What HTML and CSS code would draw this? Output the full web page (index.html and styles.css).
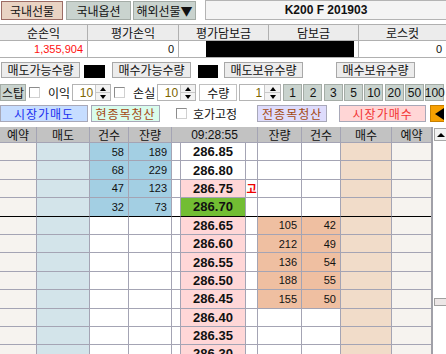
FILE: index.html
```html
<!DOCTYPE html>
<html lang="ko">
<head>
    <meta charset="UTF-8">
    <title>K200 선물 주문</title>
    <link rel="stylesheet" href="styles.css">
</head>
<body>
    <div class="screen">
        <div class="tabs">
            <div class="tab on">국내선물</div>
            <div class="tab t2">국내옵션</div>
            <div class="tab t3">해외선물▼</div>
            <div class="code">K200 F 201903</div>
        </div>

        <div class="summary">
            <div class="h">순손익</div>
            <div class="h">평가손익</div>
            <div class="h">평가담보금</div>
            <div class="h">담보금</div>
            <div class="h last">로스컷</div>
            <div class="v red">1,355,904</div>
            <div class="v">0</div>
            <div class="v masked left"><span class="mask"></span></div>
            <div class="v masked right"><span class="mask"></span></div>
            <div class="v last">0</div>
        </div>

        <div class="qty-row">
            <div class="lbl">매도가능수량</div>
            <div class="blk"></div>
            <div class="lbl l2">매수가능수량</div>
            <div class="blk b2"></div>
            <div class="lbl l3">매도보유수량</div>
            <div class="lbl l4">매수보유수량</div>
        </div>

        <div class="ctrl-row">
            <div class="stop">스탑</div>
            <span class="chk"></span>
            <span class="txt">이익</span>
            <div class="spin">
                <span class="val">10</span>
                <span class="arrows"><i class="up"></i><i class="down"></i></span>
            </div>
            <span class="chk"></span>
            <span class="txt">손실</span>
            <div class="spin">
                <span class="val">10</span>
                <span class="arrows"><i class="up"></i><i class="down"></i></span>
            </div>
            <div class="qty-lbl">수량</div>
            <div class="spin wide">
                <span class="val">1</span>
                <span class="arrows"><i class="up"></i><i class="down"></i></span>
            </div>
            <div class="nums">
                <div class="num">1</div>
                <div class="num">2</div>
                <div class="num">3</div>
                <div class="num">5</div>
                <div class="num">10</div>
                <div class="num">20</div>
                <div class="num">50</div>
                <div class="num">100</div>
            </div>
        </div>

        <div class="order-row">
            <div class="obtn sell">시장가매도</div>
            <div class="obtn clear-one">현종목청산</div>
            <span class="chk fix"></span>
            <span class="txt fix-txt">호가고정</span>
            <div class="obtn clear-all">전종목청산</div>
            <div class="obtn buy">시장가매수</div>
            <div class="collapse"><i></i></div>
        </div>

        <div class="book">
            <div class="grid" id="grid">
                <div class="hd">예약</div>
                <div class="hd">매도</div>
                <div class="hd">건수</div>
                <div class="hd">잔량</div>
                <div class="hd time">09:28:55</div>
                <div class="hd">잔량</div>
                <div class="hd">건수</div>
                <div class="hd">매수</div>
                <div class="hd end">예약</div>
            </div>
            <div class="scroll">
                <div class="sc-up"><i></i></div>
                <div class="sc-thumb"></div>
            </div>
        </div>
    </div>
    <script>
        const asks = [
            { price: '286.85', cnt: 58, qty: 189 },
            { price: '286.80', cnt: 68, qty: 229 },
            { price: '286.75', cnt: 47, qty: 123, tone: 'pink', mark: '고' },
            { price: '286.70', cnt: 32, qty: 73, tone: 'now' }
        ];
        const bids = [
            { price: '286.65', qty: 105, cnt: 42 },
            { price: '286.60', qty: 212, cnt: 49 },
            { price: '286.55', qty: 136, cnt: 54 },
            { price: '286.50', qty: 188, cnt: 55 },
            { price: '286.45', qty: 155, cnt: 50 },
            { price: '286.40' },
            { price: '286.35' },
            { price: '286.30' },
            { price: '286.25' }
        ];

        const grid = document.getElementById('grid');
        let html = '';

        asks.forEach((r, i) => {
            const line = i === asks.length - 1 ? ' split' : '';
            html += `<div class="c rsv${line}"></div>
                     <div class="c ask${line}"></div>
                     <div class="c n askd${line}">${r.cnt}</div>
                     <div class="c n askd${line}">${r.qty}</div>
                     <div class="c${line}"></div>
                     <div class="c price ${r.tone || ''}${line}">${r.price}</div>
                     <div class="c mark${line}">${r.mark || ''}</div>
                     <div class="c${line}"></div>
                     <div class="c${line}"></div>
                     <div class="c bid${line}"></div>
                     <div class="c rsv end${line}"></div>`;
        });

        bids.forEach(r => {
            const d = r.qty ? ' bidd' : '';
            html += `<div class="c rsv"></div>
                     <div class="c ask"></div>
                     <div class="c"></div>
                     <div class="c"></div>
                     <div class="c"></div>
                     <div class="c price pink">${r.price}</div>
                     <div class="c mark"></div>
                     <div class="c n${d}">${r.qty || ''}</div>
                     <div class="c n${d}">${r.cnt || ''}</div>
                     <div class="c bid"></div>
                     <div class="c rsv end"></div>`;
        });

        grid.insertAdjacentHTML('beforeend', html);
    </script>
</body>
</html>
```

FILE: styles.css
```css
body {
    margin: 0;
    background-color: #fff;
    font-family: "Liberation Sans", "Noto Sans CJK KR", sans-serif;
    font-size: 12px;
    color: #111;
    overflow: hidden;
}
.screen {
    width: 446px;
    height: 354px;
    overflow: hidden;
}
.kr,
.tab, .h, .lbl, .stop, .txt, .qty-lbl, .obtn, .hd {
    font-family: "Noto Sans CJK KR", sans-serif;
    line-height: 1;
}

/* top tabs */
.tabs {
    display: flex;
    height: 20px;
}
.tab {
    box-sizing: border-box;
    height: 19px;
    margin-top: 1px;
    display: flex;
    align-items: center;
    justify-content: center;
    border: 1px solid #a4aca6;
    background-color: #c9d3ce;
    font-size: 12px;
}
.tab.on {
    width: 62px;
    margin-left: 1px;
    background-color: #e9d3c3;
    border-color: #9c6c64;
}
.tab.t2 {
    width: 65px;
    margin-left: 3px;
}
.tab.t3 {
    width: 63px;
    margin-left: 2px;
}
.code {
    flex: 1;
    box-sizing: border-box;
    height: 20px;
    margin-left: 9px;
    border: 1px solid #b4b4b4;
    border-right: none;
    background-color: #f4f4f4;
    display: flex;
    align-items: center;
    justify-content: center;
    font-weight: bold;
    font-size: 12px;
}

/* summary */
.summary {
    display: grid;
    grid-template-columns: 88px 91px 90px 90px 87px;
    margin-top: 4px;
    border-top: 1px solid #b0b0b0;
}
.summary .h {
    height: 15px;
    display: flex;
    align-items: center;
    justify-content: center;
    background-color: #ececec;
    border-right: 1px solid #b0b0b0;
    border-bottom: 1px solid #b0b0b0;
    font-size: 12px;
}
.summary .v {
    height: 16px;
    display: flex;
    align-items: center;
    justify-content: flex-end;
    padding-right: 4px;
    border-right: 1px solid #b0b0b0;
    border-bottom: 1px solid #b0b0b0;
    font-size: 11px;
}
.summary .last {
    border-right: none;
}
.summary .red {
    color: #ff1010;
}
.summary .masked {
    padding: 0;
    align-items: stretch;
}
.summary .masked.left {
    padding-left: 27px;
    border-right: none;
}
.summary .masked.right {
    padding-right: 4px;
}
.mask {
    flex: 1;
    background-color: #000;
}

/* possible / holding quantity row */
.qty-row {
    display: flex;
    align-items: center;
    height: 16px;
    margin-top: 4px;
}
.lbl {
    box-sizing: border-box;
    width: 79px;
    height: 16px;
    margin-left: 1px;
    display: flex;
    align-items: center;
    justify-content: center;
    background-color: #ececec;
    border: 1px solid #a8a8a8;
    font-size: 12px;
}
.lbl.l2 {
    margin-left: 7px;
}
.lbl.l3 {
    margin-left: 6px;
}
.lbl.l4 {
    margin-left: 33px;
}
.blk {
    width: 21px;
    height: 13px;
    margin-left: 4px;
    margin-top: 2px;
    background-color: #000;
}
.blk.b2 {
    width: 20px;
    margin-left: 7px;
}

/* stop / quantity row */
.ctrl-row {
    display: flex;
    align-items: center;
    height: 17px;
    margin-top: 6px;
}
.stop {
    box-sizing: border-box;
    width: 26px;
    height: 17px;
    display: flex;
    align-items: center;
    justify-content: center;
    background-color: #c9d3ce;
    border: 1px solid #a4aca6;
    font-size: 12px;
}
.chk {
    box-sizing: border-box;
    width: 11px;
    height: 11px;
    margin-left: 3px;
    background-color: #fff;
    border: 1px solid #8c8c8c;
    border-right-color: #d0d0d0;
    border-bottom-color: #d0d0d0;
}
.txt {
    margin-left: 8px;
    font-size: 12px;
}
.spin {
    box-sizing: border-box;
    width: 39px;
    height: 17px;
    margin-left: 2px;
    display: flex;
    border: 1px solid #b4b4b4;
    background-color: #fff;
}
.spin .val {
    flex: 1;
    display: flex;
    align-items: center;
    justify-content: flex-end;
    padding-right: 2px;
    color: #7c6400;
    font-size: 12px;
}
.arrows {
    width: 14px;
    display: flex;
    flex-direction: column;
    border-left: 1px solid #c8c8c8;
    background-color: #f2f2f2;
}
.arrows i {
    flex: 1;
    display: flex;
    align-items: center;
    justify-content: center;
}
.arrows i::after {
    content: "";
    border-left: 3px solid transparent;
    border-right: 3px solid transparent;
}
.arrows .up {
    border-bottom: 1px solid #c8c8c8;
}
.arrows .up::after {
    border-bottom: 4px solid #000;
}
.arrows .down::after {
    border-top: 4px solid #000;
}
.qty-lbl {
    box-sizing: border-box;
    width: 38px;
    height: 17px;
    margin-left: 3px;
    padding-left: 7px;
    display: flex;
    align-items: center;
    border: 1px solid #c0c0c0;
    font-size: 12px;
}
.spin.wide {
    width: 42px;
}
.spin.wide .arrows {
    width: 15px;
}
.nums {
    display: flex;
    gap: 1.3px;
    margin-left: 2px;
}
.num {
    box-sizing: border-box;
    width: 19px;
    height: 17px;
    display: flex;
    align-items: center;
    justify-content: center;
    background-color: #c9d3ce;
    border: 1px solid #a4aca6;
    font-size: 12px;
    flex-shrink: 0;
}

/* market order buttons */
.order-row {
    display: flex;
    align-items: center;
    height: 17px;
    margin-top: 4px;
}
.obtn {
    box-sizing: border-box;
    height: 17px;
    display: flex;
    align-items: center;
    justify-content: center;
    font-size: 12px;
    letter-spacing: 1px;
    border: 1px solid #a8a8b8;
}
.obtn.sell {
    width: 88px;
    background-color: #c6ddff;
    color: #1a2ef0;
}
.obtn.clear-one {
    width: 69px;
    margin-left: 3px;
    background-color: #d9fcec;
    color: #a44a14;
}
.chk.fix {
    margin-left: 16px;
}
.fix-txt {
    margin-left: 6px;
}
.obtn.clear-all {
    width: 70px;
    margin-left: 20px;
    background-color: #dedcfc;
    color: #a44a14;
}
.obtn.buy {
    width: 87px;
    margin-left: 12px;
    background-color: #ffd6d6;
    color: #f23232;
}
.collapse {
    box-sizing: border-box;
    width: 14px;
    height: 17px;
    margin-left: 4px;
    flex-shrink: 0;
    display: flex;
    align-items: center;
    justify-content: flex-end;
    background-color: #f7a000;
    border: 1px solid #c88000;
    border-right: none;
}
.collapse i {
    border-top: 6px solid transparent;
    border-bottom: 6px solid transparent;
    border-right: 9px solid #000;
}

/* order book */
.book {
    display: flex;
    margin-top: 5px;
}
.grid {
    width: 433px;
    box-sizing: border-box;
    border-right: 2px solid #a0a0a8;
    display: grid;
    grid-template-columns: 37px 53px 39px 43px 9px 65px 12px 44px 39px 51px 39px;
    grid-template-rows: 16px;
    grid-auto-rows: 18.4px;
}
.hd {
    display: flex;
    align-items: center;
    justify-content: center;
    background-color: #c2c2c2;
    border-right: 1px solid #a4a4b4;
    border-bottom: 1px solid #a4a4b4;
    font-size: 12px;
}
.hd.time {
    grid-column: span 3;
    font-family: "Liberation Sans", sans-serif;
    font-size: 12px;
}
.hd.end,
.c.end {
    border-right: none;
}
.c {
    box-sizing: border-box;
    display: flex;
    align-items: center;
    justify-content: flex-end;
    padding-right: 4px;
    border-right: 1px solid #a4a4b4;
    border-bottom: 1px solid #a4a4b4;
    font-size: 11px;
    background-color: #fff;
}
.c.split {
    border-bottom-color: #000;
}
.c.rsv {
    background-color: #f6f3ef;
}
.c.ask {
    background-color: #d3e4ea;
}
.c.bid {
    background-color: #f1dcc9;
}
.c.askd {
    background-color: #a3cfe3;
}
.c.bidd {
    background-color: #efbfa1;
}
.c.price {
    justify-content: center;
    padding-right: 0;
    font-size: 13px;
    font-weight: bold;
}
.c.price.pink {
    background-color: #ffd7d7;
}
.c.price.now {
    background-color: #72bd33;
}
.c.mark {
    padding-right: 0;
    justify-content: center;
    color: #ee0000;
    font-family: "Noto Sans CJK KR", sans-serif;
    font-weight: bold;
    font-size: 11px;
}

/* scrollbar */
.scroll {
    width: 13px;
    padding-left: 1px;
    box-sizing: border-box;
}
.sc-up {
    box-sizing: border-box;
    width: 12px;
    height: 13px;
    margin-top: 1px;
    display: flex;
    align-items: center;
    justify-content: center;
    background-color: #f2f2f2;
    border: 1px solid #a8a8a8;
    border-right: none;
}
.sc-up i {
    border-left: 4px solid transparent;
    border-right: 4px solid transparent;
    border-bottom: 4px solid #000;
}
.sc-thumb {
    box-sizing: border-box;
    width: 12px;
    height: 8px;
    margin-top: 157px;
    background-color: #ece6e6;
    border: 1px solid #a0a0a0;
    border-right: none;
}
```
